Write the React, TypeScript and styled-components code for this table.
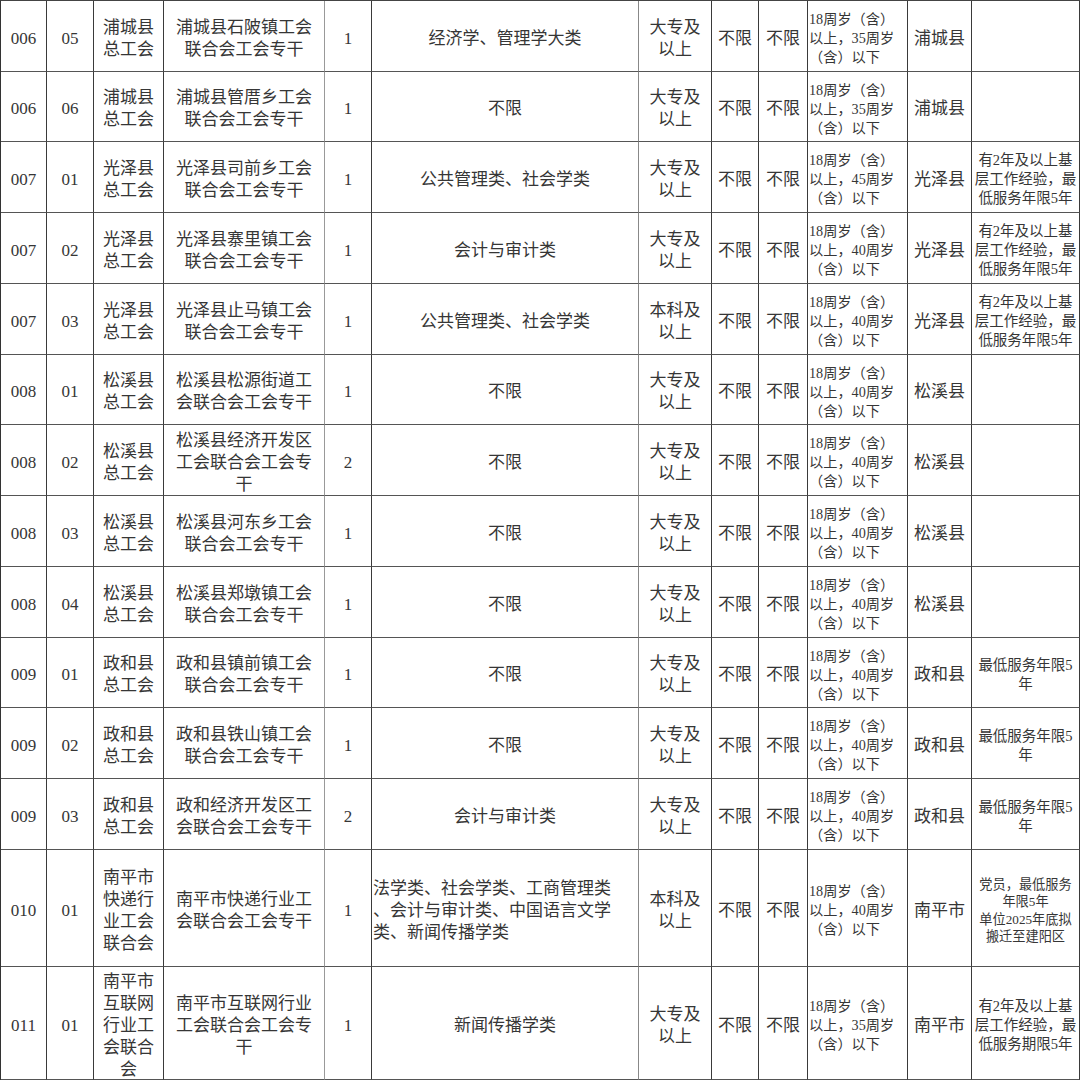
import React from 'react';
import styled, { createGlobalStyle } from 'styled-components';

type Row = {
  h: number;
  code: string;
  pos: string;
  unit: string;
  job: string;
  count: string;
  major: string;
  majorLeft?: boolean;
  edu: string;
  age: string;
  place: string;
  remark: string;
  remarkSmall?: boolean;
};

const age = (n: string) => `18周岁（含）\n以上，${n}周岁\n（含）以下`;
const gzExp = '有2年及以上基\n层工作经验，最\n低服务年限5年';
const zhRemark = '最低服务年限5\n年';
const dz = '大专及\n以上';
const bk = '本科及\n以上';

const rows: Row[] = [
  { h: 71, code: '006', pos: '05', unit: '浦城县\n总工会', job: '浦城县石陂镇工会\n联合会工会专干', count: '1', major: '经济学、管理学大类', edu: dz, age: age('35'), place: '浦城县', remark: '' },
  { h: 70, code: '006', pos: '06', unit: '浦城县\n总工会', job: '浦城县管厝乡工会\n联合会工会专干', count: '1', major: '不限', edu: dz, age: age('35'), place: '浦城县', remark: '' },
  { h: 71, code: '007', pos: '01', unit: '光泽县\n总工会', job: '光泽县司前乡工会\n联合会工会专干', count: '1', major: '公共管理类、社会学类', edu: dz, age: age('45'), place: '光泽县', remark: gzExp },
  { h: 71, code: '007', pos: '02', unit: '光泽县\n总工会', job: '光泽县寨里镇工会\n联合会工会专干', count: '1', major: '会计与审计类', edu: dz, age: age('40'), place: '光泽县', remark: gzExp },
  { h: 71, code: '007', pos: '03', unit: '光泽县\n总工会', job: '光泽县止马镇工会\n联合会工会专干', count: '1', major: '公共管理类、社会学类', edu: bk, age: age('40'), place: '光泽县', remark: gzExp },
  { h: 70, code: '008', pos: '01', unit: '松溪县\n总工会', job: '松溪县松源街道工\n会联合会工会专干', count: '1', major: '不限', edu: dz, age: age('40'), place: '松溪县', remark: '' },
  { h: 71, code: '008', pos: '02', unit: '松溪县\n总工会', job: '松溪县经济开发区\n工会联合会工会专\n干', count: '2', major: '不限', edu: dz, age: age('40'), place: '松溪县', remark: '' },
  { h: 71, code: '008', pos: '03', unit: '松溪县\n总工会', job: '松溪县河东乡工会\n联合会工会专干', count: '1', major: '不限', edu: dz, age: age('40'), place: '松溪县', remark: '' },
  { h: 71, code: '008', pos: '04', unit: '松溪县\n总工会', job: '松溪县郑墩镇工会\n联合会工会专干', count: '1', major: '不限', edu: dz, age: age('40'), place: '松溪县', remark: '' },
  { h: 70, code: '009', pos: '01', unit: '政和县\n总工会', job: '政和县镇前镇工会\n联合会工会专干', count: '1', major: '不限', edu: dz, age: age('40'), place: '政和县', remark: zhRemark },
  { h: 71, code: '009', pos: '02', unit: '政和县\n总工会', job: '政和县铁山镇工会\n联合会工会专干', count: '1', major: '不限', edu: dz, age: age('40'), place: '政和县', remark: zhRemark },
  { h: 71, code: '009', pos: '03', unit: '政和县\n总工会', job: '政和经济开发区工\n会联合会工会专干', count: '2', major: '会计与审计类', edu: dz, age: age('40'), place: '政和县', remark: zhRemark },
  {
    h: 117, code: '010', pos: '01', unit: '南平市\n快递行\n业工会\n联合会', job: '南平市快递行业工\n会联合会工会专干', count: '1',
    major: '法学类、社会学类、工商管理类\n、会计与审计类、中国语言文学\n类、新闻传播学类', majorLeft: true,
    edu: bk, age: age('40'), place: '南平市', remark: '党员，最低服务\n年限5年\n单位2025年底拟\n搬迁至建阳区', remarkSmall: true,
  },
  {
    h: 113, code: '011', pos: '01', unit: '南平市\n互联网\n行业工\n会联合\n会', job: '南平市互联网行业\n工会联合会工会专\n干', count: '1',
    major: '新闻传播学类', edu: dz, age: age('35'), place: '南平市', remark: '有2年及以上基\n层工作经验，最\n低服务期限5年',
  },
];

const GlobalStyle = createGlobalStyle`
  html, body {
    margin: 0;
    padding: 0;
    background: #fff;
  }
  body {
    font-family: 'Liberation Serif', 'Noto Sans CJK SC', serif;
    color: #363636;
  }
`;

const COLS = '46px 47px 70px 161px 47px 267px 73px 47px 49px 100px 64px 108px';

const Sheet = styled.div`
  width: 1079px;
  border-left: 1px solid #333;
  border-top: 1px solid #444;
`;

const TableRow = styled.div<{ $h: number }>`
  display: grid;
  grid-template-columns: ${COLS};
  height: ${(p) => p.$h}px;
`;

const Cell = styled.div<{ $left?: boolean; $line?: string }>`
  box-sizing: border-box;
  border-right: 1px solid ${(p) => p.$line || '#3a3a3a'};
  border-bottom: 1px solid #555;
  display: flex;
  align-items: center;
  justify-content: ${(p) => (p.$left ? 'flex-start' : 'center')};
  padding: 5px 0 0 ${(p) => (p.$left ? '1px' : '0')};
  overflow: hidden;
`;

const Text = styled.span<{ $size?: number; $lh?: number; $left?: boolean }>`
  white-space: pre;
  font-size: ${(p) => p.$size || 17}px;
  line-height: ${(p) => p.$lh || 22}px;
  text-align: ${(p) => (p.$left ? 'left' : 'center')};
`;

const App: React.FC = () => {
  return (
    <>
      <GlobalStyle />
      <Sheet>
        {rows.map((r, i) => (
          <TableRow key={i} $h={r.h}>
            <Cell><Text>{r.code}</Text></Cell>
            <Cell><Text>{r.pos}</Text></Cell>
            <Cell><Text>{r.unit}</Text></Cell>
            <Cell $line="#999"><Text>{r.job}</Text></Cell>
            <Cell><Text>{r.count}</Text></Cell>
            <Cell $left={r.majorLeft} $line="#888">
              <Text $left={r.majorLeft}>{r.major}</Text>
            </Cell>
            <Cell><Text>{r.edu}</Text></Cell>
            <Cell><Text>不限</Text></Cell>
            <Cell><Text>不限</Text></Cell>
            <Cell $left>
              <Text $left $size={14.2} $lh={19}>{r.age}</Text>
            </Cell>
            <Cell><Text>{r.place}</Text></Cell>
            <Cell>
              <Text $size={r.remarkSmall ? 13.2 : 14.5} $lh={r.remarkSmall ? 17.5 : 19}>
                {r.remark}
              </Text>
            </Cell>
          </TableRow>
        ))}
      </Sheet>
    </>
  );
};

export default App;
